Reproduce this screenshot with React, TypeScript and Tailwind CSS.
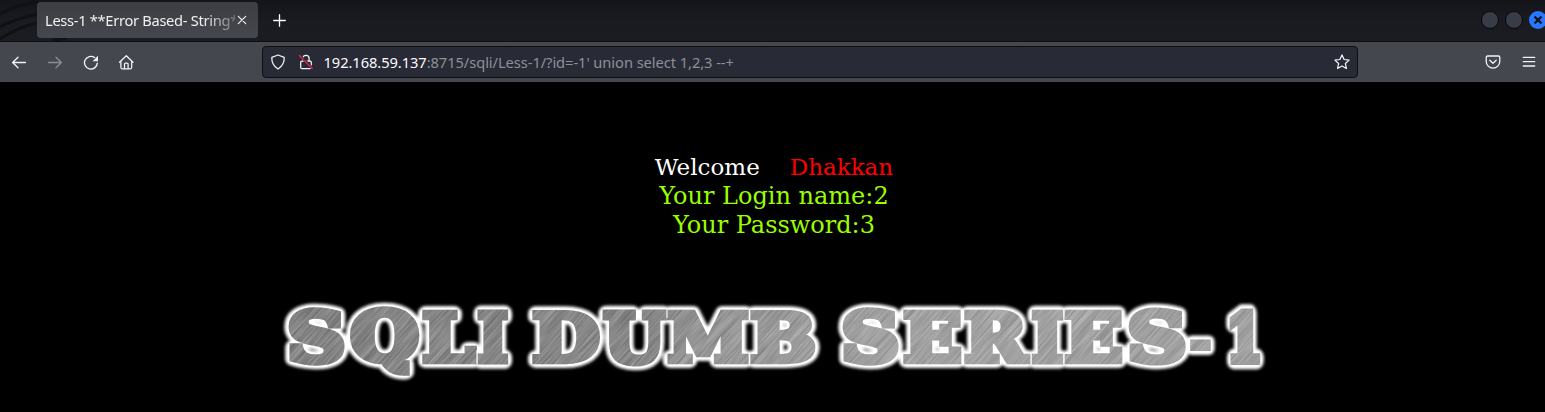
import React from "react";

type Glyph = { ch: string; x0: number; x1: number; y0?: number; y1?: number; bold?: number };

const TITLE: Glyph[] = [
  { ch: "S", x0: 289, x1: 345, y0: 307, y1: 366, bold: 8 },
  { ch: "Q", x0: 350, x1: 419, y0: 306, y1: 376, bold: 8 },
  { ch: "L", x0: 422, x1: 477 },
  { ch: "I", x0: 477, x1: 509 },
  { ch: "D", x0: 532, x1: 600 },
  { ch: "U", x0: 602, x1: 667, y1: 366 },
  { ch: "M", x0: 667, x1: 749 },
  { ch: "B", x0: 750, x1: 816 },
  { ch: "S", x0: 843, x1: 899, y0: 307, y1: 366, bold: 8 },
  { ch: "E", x0: 903, x1: 962 },
  { ch: "R", x0: 964, x1: 1031 },
  { ch: "I", x0: 1031, x1: 1064 },
  { ch: "E", x0: 1064, x1: 1123 },
  { ch: "S", x0: 1129, x1: 1186, y0: 307, y1: 366, bold: 8 },
  { ch: "-", x0: 1190, x1: 1211, y0: 338, y1: 350, bold: 4 },
  { ch: "1", x0: 1229, x1: 1261 },
];

const EMBOLDEN = 7;

function fit(ctx: CanvasRenderingContext2D, g: Glyph) {
  const m = ctx.measureText(g.ch);
  const pad = (g.bold ?? EMBOLDEN) / 2;
  const left = g.x0 + pad;
  const right = g.x1 - pad;
  const top = (g.y0 ?? 309) + pad;
  const bottom = (g.y1 ?? 364.5) - pad;
  const sx = (right - left) / (m.actualBoundingBoxRight + m.actualBoundingBoxLeft);
  const sy = (bottom - top) / (m.actualBoundingBoxAscent + m.actualBoundingBoxDescent);
  const tx = left + m.actualBoundingBoxLeft * sx;
  const ty = bottom - m.actualBoundingBoxDescent * sy;
  return { tx: tx - 270, ty: ty - 290, sx, sy };
}

function Letters(props: { extra: number; join?: "round" | "miter" }) {
  const ctx = document.createElement("canvas").getContext("2d")!;
  ctx.font = "bold 76px 'DejaVu Serif'";
  return (
    <g fill="#fff" stroke="#fff" strokeLinejoin={props.join ?? "round"}>
      {TITLE.map((g, i) => {
        const f = fit(ctx, g);
        return (
          <text
            key={i}
            transform={`translate(${f.tx} ${f.ty}) scale(${f.sx} ${f.sy})`}
            fontFamily="DejaVu Serif, serif"
            fontWeight="bold"
            fontSize="76"
            strokeWidth={(g.bold ?? EMBOLDEN) + props.extra}
            vectorEffect="non-scaling-stroke"
          >
            {g.ch}
          </text>
        );
      })}
    </g>
  );
}

function Banner() {
  return (
    <svg width="1010" height="100" viewBox="0 0 1010 100" className="ml-[270px] block shrink-0">
      <defs>
        <filter id="glow" x="-5%" y="-20%" width="110%" height="140%">
          <feGaussianBlur stdDeviation="1.5" />
        </filter>
        <filter id="brushed" x="0" y="0" width="100%" height="100%" colorInterpolationFilters="sRGB">
          <feTurbulence type="fractalNoise" baseFrequency="0.02 0.6" numOctaves="3" seed="4" />
          <feColorMatrix values="0.32 0 0 0 0.38  0.32 0 0 0 0.38  0.32 0 0 0 0.38  0 0 0 0 1" />
        </filter>
        <linearGradient id="sheen" x1="0" x2="1">
          <stop offset="0" stopColor="#000" stopOpacity=".05" />
          <stop offset=".35" stopColor="#000" stopOpacity=".02" />
          <stop offset=".42" stopColor="#fff" stopOpacity=".1" />
          <stop offset=".65" stopColor="#fff" stopOpacity=".2" />
          <stop offset="1" stopColor="#fff" stopOpacity=".18" />
        </linearGradient>
        <mask id="letters" maskUnits="userSpaceOnUse" x="0" y="0" width="1010" height="100">
          <Letters extra={0} join="miter" />
        </mask>
      </defs>
      <g filter="url(#glow)">
        <Letters extra={8} />
      </g>
      <Letters extra={3} />
      <g mask="url(#letters)">
        <g transform="rotate(-48 505 50)">
          <rect x="-50" y="-500" width="1110" height="1100" filter="url(#brushed)" />
        </g>
        <rect width="1010" height="100" fill="url(#sheen)" />
      </g>
      <path
        d="M207 60v14M397 19v9M397 63v11M479.5 19v9M479.5 63v11M761 19v9M761 63v11M794 19v9M794 63v11"
        stroke="#fff"
        strokeWidth="1"
      />
    </svg>
  );
}

function Icon(props: { className: string; children: React.ReactNode; w?: number }) {
  return (
    <svg
      viewBox="0 0 16 16"
      className={`h-4 w-4 shrink-0 ${props.className}`}
      fill="none"
      stroke="currentColor"
      strokeWidth={props.w ?? 1.25}
      strokeLinecap="round"
      strokeLinejoin="round"
    >
      {props.children}
    </svg>
  );
}

function TabStrip() {
  return (
    <div className="relative flex h-[42px] shrink-0 items-start overflow-hidden border-b border-[#0d0e11] bg-linear-to-b from-[#14151a] via-[#1a1b20] to-[#1b1c21]">
      <svg className="absolute left-0 top-0" width="80" height="41" fill="none" stroke="#101115">
        <path d="M0 14Q15 5 38 2M0 27Q14 19 38 14M0 39Q18 27 38 23" strokeWidth="3" />
        <path d="M53 41Q59 38 67 38" strokeWidth="4" />
      </svg>
      <div className="relative ml-[37px] mt-[2px] flex h-[36px] w-[221px] items-center rounded-[4px] bg-linear-to-b from-[#3d3e43] to-[#44474e] pl-2 text-[#f0f0f2]">
        <span className="w-[190px] whitespace-nowrap text-[14.67px] tracking-[-0.3px] [mask-image:linear-gradient(to_right,black_158px,transparent_202px)]">
          Less-1 **Error Based- String*
        </span>
        <Icon className="-ml-[1px]" w={1.2}>
          <path d="M4.3 4.3l7.4 7.4M11.7 4.3l-7.4 7.4" />
        </Icon>
      </div>
      <Icon className="ml-[14px] mt-[12px] text-[#fbfbfe]" w={1.3}>
        <path d="M7.5 2.7v11.6M1.7 8.5h11.6" />
      </Icon>
      <div className="-mr-[2px] ml-auto mt-[11px] flex gap-[6px]">
        <span className="h-[18px] w-[18px] rounded-full border border-[#07080b] bg-[#383c47]" />
        <span className="h-[18px] w-[18px] rounded-full border border-[#07080b] bg-[#383c47]" />
        <span className="flex h-[18px] w-[18px] items-center justify-center rounded-full bg-[#2777ff]">
          <svg width="10" height="10" viewBox="0 0 10 10" stroke="#101319" strokeWidth="2.3">
            <path d="M1.5 1.5l7 7M8.5 1.5l-7 7" />
          </svg>
        </span>
      </div>
    </div>
  );
}

function Toolbar() {
  return (
    <div className="flex h-[40px] shrink-0 items-center bg-[#44474e] text-[#f4f4f6]">
      <Icon className="ml-[11px]" w={1.3}>
        <path d="M14.5 8.5H1.8M7 3.3L1.6 8.5 7 13.7" />
      </Icon>
      <Icon className="ml-5 text-[#8c8e93]" w={1.3}>
        <path d="M1.5 8.5h12.7M9 3.3L14.4 8.5 9 13.7" />
      </Icon>
      <Icon className="ml-5" w={1.35}>
        <path d="M14.3 9.1A6.4 6.4 0 1 1 11.6 3.5" />
        <path d="M15 1.8v5.4H9.6z" fill="currentColor" stroke="none" />
      </Icon>
      <Icon className="ml-[19px]">
        <path d="M1.5 8.3L8.3 1.7 15 8.3M2.9 7.3v6.3q0 1.2 1.2 1.2h8.4q1.2 0 1.2-1.2V7.3M6.5 14.5v-4.4q0-1 1-1h1.6q1 0 1 1v4.4" />
      </Icon>
      <div className="ml-[128px] flex h-8 w-[1096px] items-center rounded-[4px] border border-[#0d0e12] bg-[#282a36]">
        <Icon className="ml-[7px]">
          <path d="M8 1L14.2 3.3Q14.6 10.8 8 15.1 1.4 10.8 1.8 3.3z" />
        </Icon>
        <Icon className="ml-3">
          <rect x="2.7" y="7" width="10.6" height="7.6" rx="1.2" />
          <path d="M4.9 6.8V4.4a3.1 3.1 0 0 1 6.2 0v2.4" />
          <path d="M1.6 1.6l13 13" stroke="#282a36" strokeWidth="2.8" />
          <path d="M1.3 1.5l13 13" stroke="#e22850" strokeWidth="1.3" />
        </Icon>
        <span className="ml-[9.5px] whitespace-pre text-[14.67px] tracking-[-0.06px] text-[#8f9097]">
          <span className="text-[#fbfbfe]">192.168.59.137</span>:8715/sqli/Less-1/?id=-1' union select 1,2,3 --+
        </span>
        <Icon className="ml-auto mr-[7px]">
          <path d="M8 .9l2.1 4.6 5 .6-3.7 3.4 1 5L8 12l-4.4 2.5 1-5L.9 6.1l5-.6z" />
        </Icon>
      </div>
      <Icon className="ml-auto mr-5" w={1.3}>
        <path d="M2.7 2h10.6q1.5 0 1.5 1.5v3.8a6.8 6.8 0 0 1-13.6 0V3.5Q1.2 2 2.7 2zM4.8 6.2L8 9.2l3.2-3" />
      </Icon>
      <Icon className="mr-2" w={1.3}>
        <path d="M2.3 3.4h11.4M2.3 7.7h11.4M2.3 12h11.4" />
      </Icon>
    </div>
  );
}

export default function App() {
  return (
    <div className="flex h-[412px] w-[1545px] flex-col overflow-hidden bg-black font-['Noto_Sans',sans-serif]">
      <TabStrip />
      <Toolbar />
      <main className="flex flex-col">
        <div className="mt-[71px] flex flex-col items-center pl-[3px] font-['DejaVu_Serif',serif] text-[24px] leading-[29px]">
          <div className="whitespace-pre text-[23px] text-white">
            Welcome<span className="ml-[30px] text-[#ff0000]">Dhakkan</span>
          </div>
          <div className="text-[#99ff00]">Your Login name:2</div>
          <div className="text-[#99ff00]">Your Password:3</div>
        </div>
        <div className="pt-[50px]">
          <Banner />
        </div>
      </main>
    </div>
  );
}
